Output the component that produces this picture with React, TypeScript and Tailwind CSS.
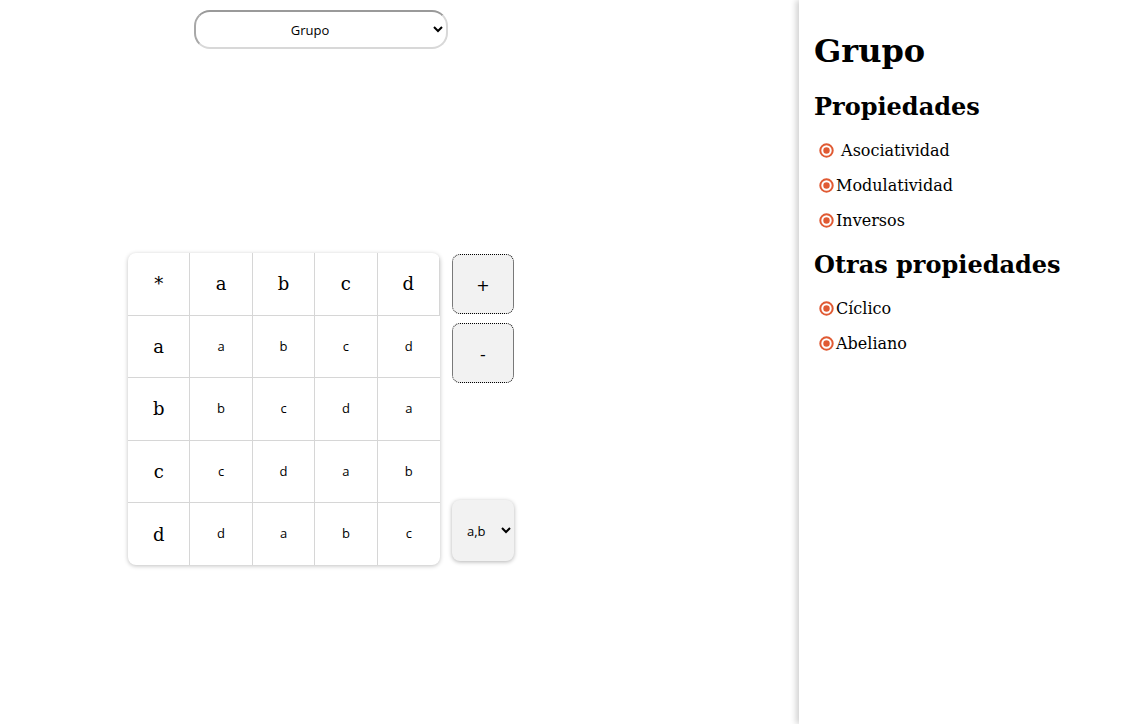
import { useState } from "react";

const elems = ["a", "b", "c", "d"];

// cayley table of Z4 with a as identity
const table = elems.map((_, i) => elems.map((_, j) => elems[(i + j) % 4]));

function Dot() {
  return (
    <svg width="15" height="15" viewBox="0 0 15 15" className="shrink-0">
      <circle cx="7.5" cy="7.5" r="6.2" fill="none" stroke="#e05a33" strokeWidth="2" />
      <circle cx="7.5" cy="7.5" r="3.2" fill="#e05a33" />
    </svg>
  );
}

function Prop({ label }: { label: string }) {
  return (
    <li className="flex items-center h-[35px] pl-[5px] gap-[2px]">
      <Dot />
      <span className="whitespace-pre">{label}</span>
    </li>
  );
}

export default function App() {
  const [kind, setKind] = useState("Grupo");
  const [pair, setPair] = useState("a,b");

  return (
    <div className="flex h-[724px] w-full overflow-hidden bg-white font-['DejaVu_Serif',serif] text-black">
      {/* left area */}
      <div className="flex-1">
        <div className="w-[642px] flex flex-col items-center pt-[10px]">
          <select
            value={kind}
            onChange={(e) => setKind(e.target.value)}
            className="w-[254px] h-[39px] rounded-[16px] border-2 border-[#d8d8d8] border-t-[#9a9a9a] border-l-[#a8a8a8] bg-white pl-3 pr-[22px] text-[13px] text-center font-['Open_Sans',sans-serif]"
          >
            <option>Grupo</option>
            <option>Anillo</option>
            <option>Cuerpo</option>
          </select>

          <div className="mt-[204px] flex gap-3">
            <div className="grid grid-cols-5 w-[312px] h-[312px] rounded-lg overflow-hidden bg-white shadow-[0_1px_4px_rgba(0,0,0,0.25)]">
              {["*", ...elems].map((h) => (
                <div
                  key={"h" + h}
                  className="flex items-center justify-center border-r border-b border-[#d6d6d6] last:border-r-0 text-[18px]"
                >
                  {h}
                </div>
              ))}
              {table.map((row, i) => (
                <div key={i} className="contents">
                  <div
                    className={`flex items-center justify-center border-r border-[#d6d6d6] text-[18px] ${i < 3 ? "border-b" : ""}`}
                  >
                    {elems[i]}
                  </div>
                  {row.map((v, j) => (
                    <div
                      key={j}
                      className={`flex items-center justify-center border-[#d6d6d6] text-[13px] font-['Open_Sans',sans-serif] ${j < 3 ? "border-r" : ""} ${i < 3 ? "border-b" : ""}`}
                    >
                      {v}
                    </div>
                  ))}
                </div>
              ))}
            </div>

            <div className="flex flex-col w-[62px] h-[312px]">
              <button className="mt-px h-[60px] rounded-lg border border-dotted border-black bg-[#f2f2f2] pt-[3px] text-[16px] font-['DejaVu_Sans',sans-serif]">
                +
              </button>
              <button className="mt-[9px] h-[60px] rounded-lg border border-dotted border-black bg-[#f2f2f2] pt-[3px] text-[16px] font-['DejaVu_Sans',sans-serif]">
                -
              </button>
              <select
                value={pair}
                onChange={(e) => setPair(e.target.value)}
                className="mt-auto mb-1 h-[61px] rounded-lg bg-[#f2f2f2] pl-[11px] pr-2 text-[13px] font-['Open_Sans',sans-serif] shadow-[0_1px_4px_rgba(0,0,0,0.3)]"
              >
                <option>a,b</option>
                <option>b,c</option>
                <option>c,d</option>
              </select>
            </div>
          </div>
        </div>
      </div>

      {/* right panel */}
      <div className="w-[331px] shrink-0 pl-[15px] pt-[33px] shadow-[-3px_0_6px_rgba(0,0,0,0.18)]">
        <h1 className="text-[32px] font-bold leading-[37px]">Grupo</h1>
        <h2 className="mt-[23px] text-[24px] font-bold leading-[28px]">Propiedades</h2>
        <ul className="mt-3 text-[16px]">
          <Prop label=" Asociatividad" />
          <Prop label="Modulatividad" />
          <Prop label="Inversos" />
        </ul>
        <h2 className="mt-[13px] text-[24px] font-bold leading-[28px]">Otras propiedades</h2>
        <ul className="mt-3 text-[16px]">
          <Prop label="Cíclico" />
          <Prop label="Abeliano" />
        </ul>
      </div>
    </div>
  );
}
